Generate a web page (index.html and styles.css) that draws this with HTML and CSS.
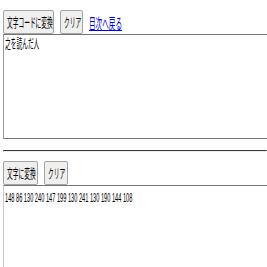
FILE: index.html
```html
<!DOCTYPE html>
<html lang="ja">
<head>
  <meta charset="UTF-8">
  <title>文字コード変換</title>
  <link rel="stylesheet" href="styles.css">
</head>
<body>
  <!-- 文字 → コード -->
  <div class="tool-bar">
    <button class="btn btn-encode"><span class="sq">文字コードに変換</span></button>
    <button class="btn btn-clear"><span class="sq">クリア</span></button>
    <a href="#" class="back-link"><span class="sq">目次へ戻る</span></a>
  </div>
  <div class="text-box box-top"><span class="sq">之を読んだ人</span></div>

  <hr class="divider">

  <!-- コード → 文字 -->
  <div class="tool-bar">
    <button class="btn btn-decode"><span class="sq">文字に変換</span></button>
    <button class="btn btn-clear2"><span class="sq">クリア</span></button>
  </div>
  <div class="text-box box-bottom"><span class="sq">148 86 130 240 147 199 130 241 130 190 144 108</span></div>
</body>
</html>
```

FILE: styles.css
```css
html, body {
  overflow: hidden;
}
body {
  margin: 10px 0 0 3px;
  font-family: "Noto Sans CJK JP", "Liberation Sans", sans-serif;
  background: #fff;
}
/* 横方向に縮めた文字 */
.sq {
  display: inline-block;
  white-space: nowrap;
  transform: scaleX(0.44);
  transform-origin: 0 50%;
}
.tool-bar {
  display: flex;
  align-items: center;
  height: 24px;
}
.btn {
  height: 24px;
  padding: 0 0 0 3px;
  text-align: left;
  overflow: hidden;
  font-family: inherit;
  font-size: 13px;
  line-height: 22px;
  color: #000;
  background-color: #efefef;
  border: 1px solid #a4a4a4;
  border-radius: 2px;
}
.btn-encode { width: 51px; }
.btn-clear { width: 23px; margin-left: 6px; }
.btn-decode { width: 35px; }
.btn-clear2 { width: 24px; margin-left: 6px; }
.back-link {
  margin-left: 6px;
  width: 36px;
  overflow: hidden;
  font-size: 15px;
  color: #0000ee;
  text-decoration: underline;
}
.back-link .sq {
  text-decoration: underline;
}
.text-box {
  width: 320px;
  box-sizing: border-box;
  padding: 1px 0 0 1px;
  font-size: 13px;
  line-height: 14px;
  border: 1px solid #767676;
  border-left-color: #9a9a9a;
  overflow: hidden;
}
.box-top {
  height: 105px;
}
.box-bottom {
  height: 120px;
  padding-top: 4px;
  border-left-color: #c8c8c8;
}
.box-bottom .sq {
  font-family: "Liberation Sans", sans-serif;
  transform: scaleX(0.435);
}
.divider {
  margin: 11px 0 9px 0;
  border: 1px inset #eee;
  border-top-color: #8a8a8a;
}
```
